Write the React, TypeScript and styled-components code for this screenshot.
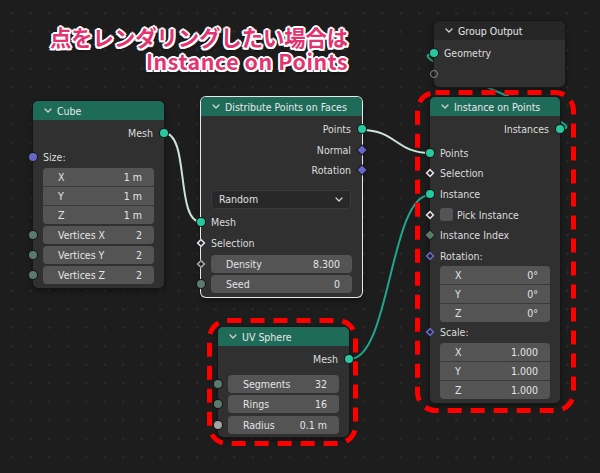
import React from "react";
import styled, { createGlobalStyle, css } from "styled-components";

const GlobalStyle = createGlobalStyle`
  html, body {
    margin: 0;
    padding: 0;
    background: #1d1d1d;
  }
`;

const Canvas = styled.div`
  position: relative;
  width: 600px;
  height: 473px;
  overflow: hidden;
  background-color: #1d1d1d;
  background-image: radial-gradient(circle at center, #2e2e2e 0 0.9px, transparent 1.3px);
  background-size: 18.5px 18.5px;
  background-position: 3px 4px;
  font-family: "DejaVu Sans Condensed", "DejaVu Sans", sans-serif;
  font-size: 10.5px;
  color: #dcdcdc;
`;

const Caption = styled.div`
  position: absolute;
  left: 50px;
  top: 25px;
  z-index: 3;
  text-align: right;
  font-family: "Noto Sans CJK JP", "Noto Sans", sans-serif;
  font-weight: 700;
  font-size: 21.3px;
  line-height: 24px;
  color: #e5336f;
  text-shadow: 0 2px 0 #fff, 2px 0 0 #fff, 0 -2px 0 #fff, -2px 0 0 #fff,
    1.5px 1.5px 0 #fff, -1.5px 1.5px 0 #fff, 1.5px -1.5px 0 #fff,
    -1.5px -1.5px 0 #fff, 0 3px 3px rgba(0, 0, 0, 0.5);
`;

const CaptionLine = styled.div<{ $spread?: number }>`
  letter-spacing: ${p => p.$spread ?? 0}px;
`;

const Wires = styled.svg`
  position: absolute;
  left: 0;
  top: 0;
  z-index: 0;
`;

const Marks = styled.svg`
  position: absolute;
  left: 0;
  top: 0;
  z-index: 2;
  pointer-events: none;
`;

const Node = styled.div<{ $x: number; $y: number; $w: number; $selected?: boolean }>`
  position: absolute;
  left: ${p => p.$x}px;
  top: ${p => p.$y}px;
  width: ${p => p.$w}px;
  z-index: 1;
  background: #303030;
  border-radius: 5px;
  box-shadow: 0 0 0 1px ${p => (p.$selected ? "#e8e8e8" : "#161616")},
    0 3px 6px rgba(0, 0, 0, 0.45);
`;

const Header = styled.div<{ $plain?: boolean }>`
  display: flex;
  align-items: center;
  gap: 5px;
  height: 19px;
  padding-left: 11px;
  background: ${p => (p.$plain ? "#262626" : "#1f6b59")};
  border-radius: 5px 5px 0 0;
  color: #e8e8e8;
`;

const Body = styled.div<{ $bottom?: number }>`
  display: flex;
  flex-direction: column;
  padding: 3px 0 ${p => p.$bottom ?? 4}px;
`;

const Row = styled.div<{ $out?: boolean; $mt?: number }>`
  position: relative;
  display: flex;
  flex: none;
  align-items: center;
  gap: 4px;
  height: 20.6px;
  margin-top: ${p => p.$mt ?? 0}px;
  padding: 0 ${p => (p.$out ? 11 : 9)}px 0 ${p => (p.$out ? 9 : 10)}px;
  justify-content: ${p => (p.$out ? "flex-end" : "flex-start")};
  white-space: nowrap;
`;

const FieldRow = styled.div<{ $mt?: number }>`
  position: relative;
  display: flex;
  flex: none;
  height: 18px;
  margin-top: ${p => p.$mt ?? 2}px;
  padding: 0 10px;
`;

const FieldStack = styled.div`
  display: flex;
  flex: none;
  flex-direction: column;
  gap: 1px;
  margin: 0 10px;
  border-radius: 4px;
  overflow: hidden;
  background: #3a3a3a;
`;

const Field = styled.div<{ $round?: boolean }>`
  flex: ${p => (p.$round ? "1 1 auto" : "0 0 18px")};
  display: flex;
  align-items: center;
  justify-content: space-between;
  height: 18px;
  padding: 0 12px 0 15px;
  background: #545454;
  color: #e4e4e4;
  border-radius: ${p => (p.$round ? 4 : 0)}px;
  white-space: nowrap;
`;

const Dropdown = styled.div`
  display: flex;
  flex: none;
  align-items: center;
  justify-content: space-between;
  height: 17px;
  margin: 9px 11px 0 10px;
  padding: 0 7px;
  background: #282828;
  border: 1px solid #3b3b3b;
  border-radius: 4px;
  color: #e0e0e0;
`;

const Checkbox = styled.span`
  width: 13px;
  height: 13px;
  border-radius: 3px;
  background: #545454;
`;

type Shape = "circle" | "diamond" | "hollow" | "ring";

const Socket = styled.span<{ $shape: Shape; $color: string; $right?: boolean }>`
  position: absolute;
  top: 50%;
  box-sizing: border-box;
  ${p => (p.$right ? "right" : "left")}: -4px;
  width: 8px;
  height: 8px;
  margin-top: -4px;
  ${p =>
    p.$shape === "circle" &&
    css`
      border-radius: 50%;
      background: ${p.$color};
      box-shadow: 0 0 0 1px #151515;
    `}
  ${p =>
    p.$shape === "ring" &&
    css`
      border-radius: 50%;
      border: 1.5px solid ${p.$color};
    `}
  ${p =>
    p.$shape === "diamond" &&
    css`
      transform: rotate(45deg) scale(0.8);
      background: ${p.$color};
      box-shadow: 0 0 0 1px #151515;
    `}
  ${p =>
    p.$shape === "hollow" &&
    css`
      transform: rotate(45deg) scale(0.8);
      background: #202020;
      border: 2px solid ${p.$color};
    `}
`;

const GEO = "#27c7a0";
const VEC = "#6767c9";
const INT = "#5b7a6d";
const FLOAT = "#a3a3a3";
const BOOL = "#e2dbe6";

const Chevron = () => (
  <svg width="8" height="5" viewBox="0 0 8 5">
    <polyline
      points="1,1 4,4 7,1"
      fill="none"
      stroke="#d6d6d6"
      strokeWidth="1.2"
      strokeLinecap="round"
      strokeLinejoin="round"
    />
  </svg>
);

const Title: React.FC<{ text: string; plain?: boolean }> = ({ text, plain }) => (
  <Header $plain={plain}>
    <Chevron />
    <span>{text}</span>
  </Header>
);

const Vector: React.FC<{ values: string[] }> = ({ values }) => (
  <FieldStack>
    {["X", "Y", "Z"].map((axis, i) => (
      <Field key={axis}>
        <span>{axis}</span>
        <span>{values[i]}</span>
      </Field>
    ))}
  </FieldStack>
);

const Value: React.FC<{
  label: string;
  value: string;
  shape: Shape;
  color: string;
  mt?: number;
}> = ({ label, value, shape, color, mt }) => (
  <FieldRow $mt={mt}>
    <Socket $shape={shape} $color={color} />
    <Field $round>
      <span>{label}</span>
      <span>{value}</span>
    </Field>
  </FieldRow>
);

const App: React.FC = () => {
  return (
    <Canvas>
      <GlobalStyle />

      <Wires width="600" height="473">
        <g fill="none" strokeWidth="2" strokeLinecap="round">
          <path d="M164,133 C190,133 175,222 201,222" stroke="#cfe3da" />
          <path d="M362,130 C396,130 396,153 430,153" stroke="#cfe3da" />
          <path d="M350,359 C390,359 390,195 430,195" stroke="#1fa78a" />
          <path d="M560,129 C606,129 388,54 434,54" stroke="#1fa78a" />
        </g>
      </Wires>

      <Caption>
        <CaptionLine>点をレンダリングしたい場合は</CaptionLine>
        <CaptionLine $spread={0.6}>Instance on Points</CaptionLine>
      </Caption>

      <Node $x={33} $y={101} $w={131}>
        <Title text="Cube" />
        <Body>
          <Row $out>
            Mesh
            <Socket $shape="circle" $color={GEO} $right />
          </Row>
          <Row $mt={3.4}>
            <Socket $shape="circle" $color={VEC} />
            Size:
          </Row>
          <Vector values={["1 m", "1 m", "1 m"]} />
          <Value label="Vertices X" value="2" shape="circle" color={INT} />
          <Value label="Vertices Y" value="2" shape="circle" color={INT} />
          <Value label="Vertices Z" value="2" shape="circle" color={INT} />
        </Body>
      </Node>

      <Node $x={201} $y={97} $w={161} $selected>
        <Title text="Distribute Points on Faces" />
        <Body>
          <Row $out>
            Points
            <Socket $shape="circle" $color={GEO} $right />
          </Row>
          <Row $out>
            Normal
            <Socket $shape="diamond" $color={VEC} $right />
          </Row>
          <Row $out>
            Rotation
            <Socket $shape="diamond" $color={VEC} $right />
          </Row>
          <Dropdown>
            <span>Random</span>
            <Chevron />
          </Dropdown>
          <Row $mt={3}>
            <Socket $shape="circle" $color={GEO} />
            Mesh
          </Row>
          <Row>
            <Socket $shape="hollow" $color={BOOL} />
            Selection
          </Row>
          <Value label="Density" value="8.300" shape="hollow" color={FLOAT} />
          <Value label="Seed" value="0" shape="circle" color={INT} />
        </Body>
      </Node>

      <Node $x={434} $y={21} $w={131}>
        <Title text="Group Output" plain />
        <Body $bottom={3}>
          <Row>
            <Socket $shape="circle" $color={GEO} />
            Geometry
          </Row>
          <Row>
            <Socket $shape="ring" $color="#8a8a8a" />
          </Row>
        </Body>
      </Node>

      <Node $x={430} $y={97} $w={130}>
        <Title text="Instance on Points" />
        <Body>
          <Row $out>
            Instances
            <Socket $shape="circle" $color={GEO} $right />
          </Row>
          <Row $mt={3}>
            <Socket $shape="circle" $color={GEO} />
            Points
          </Row>
          <Row>
            <Socket $shape="hollow" $color={BOOL} />
            Selection
          </Row>
          <Row>
            <Socket $shape="circle" $color={GEO} />
            Instance
          </Row>
          <Row>
            <Socket $shape="hollow" $color={BOOL} />
            <Checkbox />
            Pick Instance
          </Row>
          <Row>
            <Socket $shape="diamond" $color={INT} />
            Instance Index
          </Row>
          <Row>
            <Socket $shape="hollow" $color={VEC} />
            Rotation:
          </Row>
          <Vector values={["0°", "0°", "0°"]} />
          <Row>
            <Socket $shape="hollow" $color={VEC} />
            Scale:
          </Row>
          <Vector values={["1.000", "1.000", "1.000"]} />
        </Body>
      </Node>

      <Node $x={218} $y={327} $w={131}>
        <Title text="UV Sphere" />
        <Body $bottom={3}>
          <Row $out>
            Mesh
            <Socket $shape="circle" $color={GEO} $right />
          </Row>
          <Value label="Segments" value="32" shape="circle" color={INT} mt={5.4} />
          <Value label="Rings" value="16" shape="circle" color={INT} mt={2.5} />
          <Value label="Radius" value="0.1 m" shape="circle" color={FLOAT} mt={2.5} />
        </Body>
      </Node>

      <Marks width="600" height="473">
        <g fill="none" stroke="#ff0000" strokeWidth="5" strokeDasharray="14 9">
          <rect x="417.5" y="92.5" width="156" height="318" rx="18" />
          <rect x="209.5" y="320.5" width="146" height="123" rx="18" />
        </g>
      </Marks>
    </Canvas>
  );
};

export default App;
